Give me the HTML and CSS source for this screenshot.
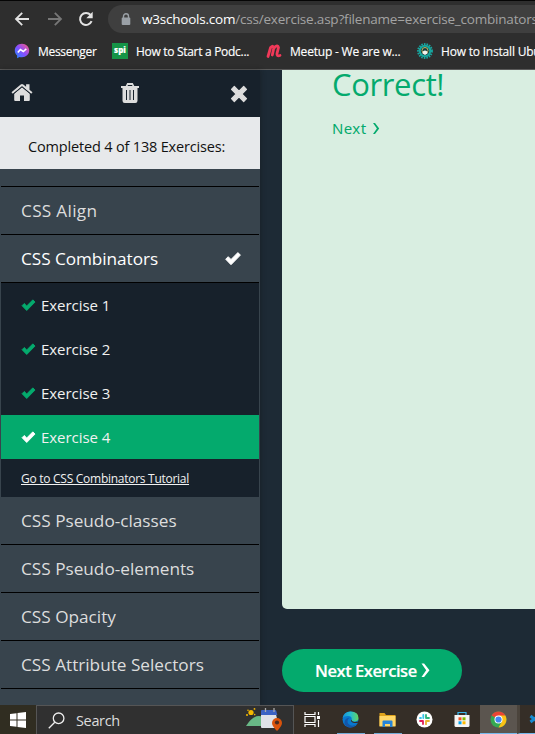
FILE: index.html
```html
<!DOCTYPE html>
<html lang="en">
<head>
<meta charset="utf-8">
<title>CSS Exercises</title>
<link rel="stylesheet" href="styles.css">
</head>
<body>
<svg width="0" height="0" class="defs">
  <symbol id="check" viewBox="0 0 17 14"><path d="M1.2 7.2 3.7 4.7 6.5 7.5 13.4.6 15.9 3.1 6.5 12.7Z" fill="currentColor" stroke="currentColor" stroke-linejoin="round"/></symbol>
</svg>
<header class="browser">
  <div class="toolbar">
    <svg class="back" width="16" height="16" viewBox="0 0 16 16"><path d="M15 8H2M8.2 1.8 2 8l6.2 6.2" fill="none" stroke="#e3e3e3" stroke-width="1.8"/></svg>
    <svg class="forward" width="16" height="16" viewBox="0 0 16 16"><path d="M1 8h13M7.8 1.8 14 8l-6.2 6.2" fill="none" stroke="#777" stroke-width="1.8"/></svg>
    <svg class="reload" width="16" height="16" viewBox="0 0 16 16"><path d="M13.6 10.2A6 6 0 1 1 12.6 4" fill="none" stroke="#e3e3e3" stroke-width="2"/><path d="M14.7.8v6.4H8.3Z" fill="#e3e3e3"/></svg>
    <div class="address">
      <svg width="10" height="13" viewBox="0 0 10 13"><path d="M2.5 5V3.3a2.5 2.5 0 0 1 5 0V5" fill="none" stroke="#9aa0a6" stroke-width="1.4"/><rect x=".7" y="4.5" width="8.6" height="7.5" rx="1" fill="#9aa0a6"/></svg>
      <span class="host">w3schools.com</span><span class="path">/css/exercise.asp?filename=exercise_combinators</span>
    </div>
  </div>
  <nav class="bookmarks">
    <svg class="b1" width="16" height="16" viewBox="0 0 16 16"><defs><linearGradient id="ms" x1="0" y1="1" x2="1" y2="0"><stop stop-color="#188cff"/><stop offset=".5" stop-color="#8a4dff"/><stop offset="1" stop-color="#ff5c78"/></linearGradient></defs><path d="M8 .8C4 .8.8 3.7.8 7.600c0 2.100.8 3.800 2.300 5V15.200l2.400-1.200c.8.2 1.600.3 2.500.3 4 0 7.200-2.900 7.200-6.700S12 .8 8 .8Z" fill="url(#ms)"/><path d="m3.800 9.500 2.600-3L9.300 8.500l3-2.600" fill="none" stroke="#fff" stroke-width="1.600"/></svg>
    <span class="t1">Messenger</span>
    <span class="spi">spi</span>
    <span class="t2">How to Start a Podc...</span>
    <svg class="b3" width="17" height="16" viewBox="0 0 17 16"><path d="M3 13.500 5.600 4.500Q8.600 1.800 8.800 5L7.300 12M8.800 5.200Q12.800 1 13.500 4.500L12 10.500Q11.500 13.500 15 12.500" fill="none" stroke="#f13959" stroke-width="2.800" stroke-linecap="round" stroke-linejoin="round"/></svg>
    <span class="t3">Meetup - We are w...</span>
    <svg class="b4" width="16" height="16" viewBox="0 0 16 16"><circle cx="8" cy="8" r="6.900" fill="none" stroke="#18a5a0" stroke-width="2" stroke-dasharray="1.600 1"/><circle cx="8" cy="8" r="5.200" fill="#153b3d" stroke="#16a69d" stroke-width="2"/><circle cx="8" cy="7.500" r="3" fill="none" stroke="#d8c266" stroke-width=".9"/><path d="M5.500 10.500Q5.500 7.500 8 7.500T10.500 10.500L8 12Z" fill="#f2f3ee"/></svg>
    <span class="t4">How to Install Ubuntu</span>
  </nav>
</header>
<main>
  <aside class="sidebar">
    <div class="actions">
      <svg class="home" width="22" height="19" viewBox="0 0 22 19"><path d="M11 4.300 3.200 10.800V17q0 1 1 1H9v-5.500h4V18h4.800q1 0 1-1v-6.200Z"/><path d="M.5 9.200 9.700 1.400q1.300-1 2.600 0l2.800 2.400V1.300h3.400v5.400l3 2.500-1.300 1.600L11 3.300 1.800 10.800Z"/><path d="M2.300 11 11 3.800l8.700 7.200" fill="none" stroke="#17212b" stroke-width=".8"/></svg>
      <svg class="trash" width="20" height="22" viewBox="0 0 20 22"><path d="M7.200 1h5.600l1.500 2.900H19v2h-1.500v12.800q0 2.300-2.200 2.300H4.700q-2.200 0-2.200-2.300V5.900H1v-2h4.700ZM8 3l-.5 1h5L12 3ZM6 8v10h1V8Zm3.500 0v10h1V8ZM13 8v10h1V8Z" fill-rule="evenodd"/></svg>
      <svg class="close" width="18" height="18" viewBox="0 0 18 18"><path d="M4.300 1.500 9 6.200l4.700-4.700 2.800 2.800L11.800 9l4.700 4.700-2.800 2.800L9 11.800l-4.700 4.700-2.800-2.800L6.200 9 1.500 4.300Z" stroke="#ddd" stroke-width="1.200" stroke-linejoin="round"/></svg>
    </div>
    <div class="progress"><span>Completed 4 of 138 Exercises:</span></div>
    <div class="menu">
      <div class="row tail"></div>
      <div class="row"><span class="m1">CSS Align</span></div>
      <div class="row open"><span class="m2">CSS Combinators</span><svg width="18" height="14"><use href="#check"/></svg></div>
      <div class="exercises">
        <div class="exercise"><svg width="15" height="13"><use href="#check"/></svg><span>Exercise 1</span></div>
        <div class="exercise"><svg width="15" height="13"><use href="#check"/></svg><span>Exercise 2</span></div>
        <div class="exercise"><svg width="15" height="13"><use href="#check"/></svg><span>Exercise 3</span></div>
        <div class="exercise active"><svg width="15" height="13"><use href="#check"/></svg><span>Exercise 4</span></div>
        <div class="tutorial"><a>Go to CSS Combinators Tutorial</a></div>
      </div>
      <div class="row"><span class="m3">CSS Pseudo-classes</span></div>
      <div class="row"><span class="m4">CSS Pseudo-elements</span></div>
      <div class="row"><span class="m5">CSS Opacity</span></div>
      <div class="row"><span class="m6">CSS Attribute Selectors</span></div>
    </div>
  </aside>
  <section class="content">
    <div class="result">
      <h1>Correct!</h1>
      <div class="next"><span>Next</span><svg width="8" height="13" viewBox="0 0 8 13"><path d="M1 1h2L7.200 6.500 3 12H1l3.900-5.500Z" fill="#04aa6d"/></svg></div>
    </div>
    <div class="button"><span>Next Exercise</span><svg width="9" height="15" viewBox="0 0 9 15"><path d="M.5.500h2.600L8.500 7.300l-5.400 6.800H.5L5.200 7.300Z" fill="#fff"/></svg></div>
  </section>
</main>
<footer class="taskbar">
  <div class="start"><svg width="16" height="16" viewBox="0 0 16 16"><path d="M0 2 6.500 1.200v6.300H0ZM7.500 1 16 0v7.500H7.500ZM0 8.500h6.500v6.300L0 14ZM7.500 8.500H16V16l-8.500-1Z" fill="#fff"/></svg></div>
  <div class="search">
    <svg width="17" height="17" viewBox="0 0 17 17"><circle cx="10.600" cy="6.300" r="5.300" fill="none" stroke="#eee" stroke-width="1.300"/><path d="M6.800 10.200.8 16.200" stroke="#eee" stroke-width="1.300"/></svg>
    <span>Search</span>
    <svg class="scene" width="37" height="24" viewBox="0 0 37 24"><path d="M0 18Q8 5 17 9v9Z" fill="#69b886"/><g fill="#f5b800"><circle cx="5" cy="4.500" r="2.600"/><circle cx="1" cy="7" r="1"/><circle cx="2" cy="2.300" r=".8"/><circle cx="8.500" cy=".9" r=".9"/><circle cx="8.700" cy="6.600" r=".8"/></g><path d="M15 6.500h15l3 12.500q0 1-1 1H16q-1 0-1-1Z" fill="#dfe2e8"/><path d="M16 2h13q1 0 1.300 1l1 4H15V3q0-1 1-1Z" fill="#3b63c4"/><path d="M19.500 0v4M28 0v4" stroke="#aaa" stroke-width="1.300"/><path d="M31 23q-5-5-5-8a5 5 0 0 1 10 0q0 3-5 8Z" fill="#d9530c"/><circle cx="31" cy="14.500" r="2.100" fill="#4a2b20"/></svg>
  </div>
  <div class="apps">
    <div class="app"><svg width="17" height="17" viewBox="0 0 17 17"><path d="M1 1v2.500h10V1M1 16v-2.500h10V16M1 5.500h10v6H1ZM14.500 1v3M14.500 9v7" fill="none" stroke="#fff" stroke-width="1.200"/><path d="M13 5h3v3h-3Z" fill="#fff"/></svg></div>
    <div class="app run"><svg width="17" height="17" viewBox="0 0 17 17"><defs><linearGradient id="ed"><stop stop-color="#168dd7"/><stop offset=".5" stop-color="#26bdcf"/><stop offset="1" stop-color="#62d660"/></linearGradient></defs><circle cx="8.500" cy="8.500" r="8" fill="#0878ce"/><path d="M.5 7Q2 .5 8.500.500q8 0 8 6.500 0 3-3.500 3.500-4 .5-3.500-1.500 1-4-3.500-4Q2 5 .5 7Z" fill="url(#ed)"/><path d="M7.500 6.500Q4 10 6.500 13q3 3 8 .5-3 3.500-7.500 3Q1 14.500 3 9q1-2 4.500-2.500Z" fill="#1456a8"/><path d="M9.500 8.500q-1.500 1.500 1 3 3 1.200 6 0l.5-1.500q-2.500 1.400-5.500.8-2-.5-2-2.300Z" fill="#332c26"/></svg></div>
    <div class="app run"><svg width="17" height="16" viewBox="0 0 17 16"><path d="M.5 1h5L7 3h9.500v11H.5Z" fill="#dfa31c"/><path d="M.5 4h16v10.500H.5Z" fill="#ffd768"/><path d="M3.500 15V9.500q0-1 1-1h8q1 0 1 1V15H11v-3H6v3Z" fill="#2785d8"/></svg></div>
    <div class="app"><svg width="17" height="17" viewBox="0 0 17 17"><circle cx="8.500" cy="8.500" r="8" fill="#fff"/><g stroke-width="1.800" stroke-linecap="round"><path d="M7.300 3.800V7M4 7h1" stroke="#36c5f0"/><path d="M10 4v2.800M10 7h3" stroke="#2eb67d"/><path d="M4 10h3M7 10v3" stroke="#e01e5a"/><path d="M10 10v3.200M10 10h3" stroke="#ecb22e"/></g></svg></div>
    <div class="app"><svg width="16" height="17" viewBox="0 0 16 17"><path d="M4 4V1.500h8V4" fill="none" stroke="#39b7ee" stroke-width="1.200"/><path d="M.5 4h15v10.500q0 1.500-1.500 1.500H2q-1.500 0-1.500-1.500Z" fill="#f5f5f5"/><path d="M4.500 6.300h3v3h-3Z" fill="#f25022"/><path d="M8.500 6.300h3v3h-3Z" fill="#7fba00"/><path d="M4.500 10.300h3v3h-3Z" fill="#00a4ef"/><path d="M8.500 10.300h3v3h-3Z" fill="#ffb900"/></svg></div>
    <div class="app chrome"><svg width="17" height="17" viewBox="0 0 17 17"><circle cx="8.500" cy="8.500" r="8" fill="#35a853"/><path d="M8.500 8.500 1.600 4.500A8 8 0 0 1 15.400 4.500Z" fill="#ea4335"/><path d="M8.500 4.500h6.900A8 8 0 0 1 8.500 16.500L12 10.500Z" fill="#fbc116"/><circle cx="8.500" cy="8.500" r="4" fill="#fff"/><circle cx="8.500" cy="8.500" r="3.100" fill="#4285f4"/></svg></div>
    <div class="app code"><svg width="16" height="16" viewBox="0 0 16 16"><path d="m1.500 5 10 8V3l-10 8" fill="none" stroke="#168bd2" stroke-width="3"/></svg></div>
  </div>
</footer>
</body>
</html>
```

FILE: styles.css
```css
* { box-sizing: border-box; }
body { margin: 0; width: 535px; height: 734px; overflow: hidden; background: #1d2a35; font-family: "Open Sans", "Noto Sans", sans-serif; }
svg { display: block; flex: none; overflow: visible; }
span, a { white-space: nowrap; flex: none; }
.defs { position: absolute; }
.browser { height: 70px; background: #2e2e2e; border-top: 1px solid #050505; border-bottom: 1px solid #5a5a5a; overflow: hidden; }
.toolbar { display: flex; align-items: center; height: 36px; padding-left: 14px; }
.forward { margin-left: 17px; }
.reload { margin-left: 15px; }
.address { display: flex; align-items: center; margin-left: 14px; width: 600px; flex: none; height: 28px; border-radius: 14px; background: #3f3f3f; padding-left: 13px; font-size: 13.5px; }
.host { margin-left: 11px; color: #fff; letter-spacing: -.22px; }
.path { color: #a3a3a3; letter-spacing: -.2px; }
.bookmarks { display: flex; align-items: center; height: 28px; padding-left: 14px; color: #fff; font-size: 12px; letter-spacing: -.3px; -webkit-text-stroke: .15px; }
.t1 { width: 58px; margin-left: 8px; }
.spi { width: 16px; height: 16px; margin-left: 16px; background: #159447; font-size: 8px; font-weight: 800; line-height: 14px; letter-spacing: 0; text-align: center; }
.t2 { width: 113px; margin-left: 8px; }
.b3 { margin-left: 16px; }
.t3 { width: 111px; margin-left: 8px; letter-spacing: -.2px; }
.b4 { margin-left: 16px; }
.t4 { margin-left: 8px; letter-spacing: -.2px; }
main { display: flex; height: 635px; }
.sidebar { width: 260px; height: 635px; flex: none; overflow: hidden; background: #38444d; box-shadow: 1px 0 5px #1115; }
.actions { height: 47px; background: #17212b; display: flex; align-items: center; padding-left: 11px; fill: #ddd; }
.home { margin-top: -2px; }
.trash { margin-left: 87px; margin-top: -2px; }
.close { margin-left: 90px; }
.progress { height: 52px; background: #e7e9eb; color: #111; padding: 19px 0 0 28px; font-size: 14.5px; line-height: 21px; letter-spacing: -.17px; }
.menu { margin: 0 1px; }
.row { height: 48px; border-bottom: 1px solid #000; display: flex; align-items: center; padding: 0 17px 0 20px; color: #ddd; font-size: 17.2px; justify-content: space-between; }
.m1 { letter-spacing: .3px; }
.m2 { letter-spacing: -.05px; }
.tail { height: 18px; }
.open { color: #fff; }
.exercises { height: 214px; background: #17212b; color: #f1f1f1; }
.exercise { height: 44px; display: flex; align-items: center; padding-left: 20px; font-size: 15px; letter-spacing: -.05px; }
.exercise svg { color: #04aa6d; }
.exercise span { margin-left: 5px; margin-top: -1px; }
.active { background: #04aa6d; }
.exercise.active svg { color: #fff; }
.tutorial { height: 38px; display: flex; align-items: center; padding: 0 0 0 20px; font-size: 12px; letter-spacing: -.27px; text-decoration: underline; }
.content { flex: 1; min-width: 0; padding-left: 22px; overflow: hidden; }
.result { height: 539px; background: #d9eee1; border-bottom-left-radius: 5px; padding-left: 50px; color: #04aa6d; display: flow-root; }
h1 { margin: -8px 0 0; height: 44px; font-size: 31px; line-height: 44px; font-weight: 400; letter-spacing: -.35px; }
.next { margin-top: 12px; height: 20px; display: flex; align-items: center; font-family: "Noto Sans", sans-serif; font-size: 15px; letter-spacing: .4px; }
.next svg { margin-left: 5px; }
.button { margin-top: 40px; width: 180px; height: 43px; border-radius: 22px; background: #04aa6d; color: #fff; display: flex; align-items: center; padding-left: 33px; font-size: 16.5px; font-weight: 600; letter-spacing: -.45px; -webkit-text-stroke: .2px; }
.button svg { margin-left: 4px; }
.taskbar { height: 29px; background: #352e27; display: flex; }
.start { width: 36px; flex: none; padding: 7px 0 0 10px; background: #302d21; }
.search { width: 258px; height: 30px; flex: none; border: 1px solid #555; background: #303030; display: flex; align-items: center; padding-left: 11px; color: #ddd; font-size: 14.5px; letter-spacing: -.35px; }
.search span { width: 44px; margin-left: 11px; }
.scene { margin-left: 126px; }
.apps { display: flex; flex: none; }
.app { width: 37px; height: 29px; flex: none; display: flex; justify-content: center; align-items: center; }
.apps .app:first-child { width: 36px; margin-right: 2px; }
.run { position: relative; }
.run::after { content: ""; position: absolute; bottom: 0; left: 5px; width: 28px; height: 1px; background: #72acd8; }
.app.chrome { background: #5b554f; border-bottom: 1px solid #76b9ed; }
.code { border-left: 3px solid #4b443c; border-bottom: 1px solid #76b9ed; }
```
